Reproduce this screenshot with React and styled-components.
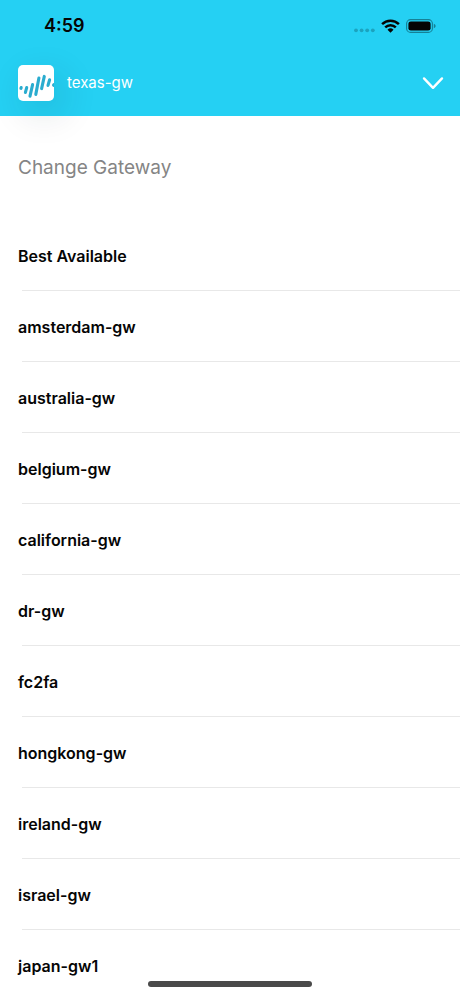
import React, { useState } from "react";
import styled, { createGlobalStyle, css } from "styled-components";

const GlobalStyle = createGlobalStyle`
  * {
    box-sizing: border-box;
  }

  body {
    margin: 0;
    background-color: #fff;
    font-family: "Inter", "Liberation Sans", sans-serif;
    color: #050505;
  }
`;

const Screen = styled.div`
  position: relative;
  display: flex;
  flex-direction: column;
  height: 100vh;
  overflow: hidden;
  background-color: #fff;
`;

const Header = styled.header`
  flex: none;
  background-color: #25d0f3;
`;

const StatusBar = styled.div`
  display: flex;
  align-items: center;
  justify-content: space-between;
  height: 50px;
  padding: 2px 24px 0 44px;
`;

const Clock = styled.time`
  font-size: 18px;
  font-weight: 600;
  line-height: 24px;
`;

const StatusIcons = styled.div`
  display: flex;
  align-items: center;
  gap: 6px;

  & svg {
    display: block;
  }
`;

const GatewayBar = styled.button`
  display: flex;
  align-items: center;
  width: 100%;
  height: 66px;
  padding: 0 16px 0 18px;
  border: none;
  background: none;
  color: #fff;
  font-family: inherit;
  text-align: left;
  cursor: pointer;
`;

const Logo = styled.span`
  flex: none;
  width: 36px;
  height: 36px;
  border-radius: 5px;
  background-color: #fff;
  box-shadow: 8px 12px 36px rgba(0, 40, 60, 0.14);

  & svg {
    display: block;
  }
`;

const CurrentGateway = styled.span`
  flex: 1;
  margin-left: 13px;
  font-size: 15px;
  font-weight: 400;
  line-height: 20px;
`;

const Title = styled.h1`
  flex: none;
  margin: 0;
  padding: 40px 18px;
  font-size: 19px;
  font-weight: 400;
  line-height: 24px;
  color: #858585;
`;

const GatewayList = styled.ul`
  flex: 1;
  min-height: 0;
  margin: 0;
  padding: 0;
  list-style: none;
  overflow-y: auto;
  scrollbar-width: none;
`;

const GatewayItem = styled.li`
  ${(props) =>
    props.$divided &&
    css`
      &::before {
        content: "";
        display: block;
        height: 1px;
        margin-left: 22px;
        background-color: #e8e8e8;
      }
    `};
`;

const GatewayButton = styled.button`
  display: block;
  width: 100%;
  height: 70px;
  padding: 2px 18px 0;
  border: none;
  background: none;
  color: inherit;
  font-family: inherit;
  font-size: 16px;
  font-weight: 600;
  line-height: 20px;
  text-align: left;
  cursor: pointer;
`;

const HomeIndicator = styled.div`
  position: absolute;
  bottom: 9px;
  left: 50%;
  width: 164px;
  height: 6px;
  margin-left: -82px;
  border-radius: 3px;
  background-color: #4a4a4a;
`;

const gateways = [
  "Best Available",
  "amsterdam-gw",
  "australia-gw",
  "belgium-gw",
  "california-gw",
  "dr-gw",
  "fc2fa",
  "hongkong-gw",
  "ireland-gw",
  "israel-gw",
  "japan-gw1",
];

const SignalDots = () => (
  <svg width="21" height="14" viewBox="0 0 21 14" fill="#1ba3bf" aria-hidden="true">
    <circle cx="2" cy="11.3" r="1.9" />
    <circle cx="7.6" cy="11.3" r="1.9" />
    <circle cx="13.2" cy="11.3" r="1.9" />
    <circle cx="18.8" cy="11.3" r="1.9" />
  </svg>
);

const Wifi = () => (
  <svg width="19" height="14" viewBox="0 0 19 14" aria-hidden="true">
    <g fill="none" stroke="#050505" strokeWidth="2.5">
      <path d="M1.1 5.1a12 12 0 0 1 16.8 0" />
      <path d="M4.2 8.3a7.6 7.6 0 0 1 10.6 0" />
    </g>
    <path d="M9.5 13.8 6.5 10.8a4.3 4.3 0 0 1 6 0z" fill="#050505" />
  </svg>
);

const Battery = () => (
  <svg width="30" height="14" viewBox="0 0 30 14" aria-hidden="true">
    <rect x="0.6" y="0.6" width="25.8" height="12.8" rx="4" fill="none" stroke="#158096" strokeWidth="1.1" />
    <rect x="2.4" y="2.4" width="22.2" height="9.2" rx="2.4" fill="#050505" />
    <path d="M27.8 4.8c1.3.5 1.8 1.2 1.8 2.2s-.5 1.7-1.8 2.2z" fill="#158096" />
  </svg>
);

const LogoMark = () => (
  <svg width="36" height="36" viewBox="0 0 36 36" aria-hidden="true">
    <g stroke="#2aaccf" strokeWidth="3.1" strokeLinecap="round">
      <path d="M3.2 22.5 2.9 23.4" />
      <path d="M8.7 22.6 7.4 27.4" />
      <path d="M14.6 19.6 12 31.2" />
      <path d="M20.9 13 17.8 29.4" />
      <path d="M26.3 11.4 23.6 23.6" />
      <path d="M31.6 14.8 30 20.4" />
    </g>
    <path d="M36 18a2 2 0 0 0-1.8 2.8q.6 1.2 1.8 1.2z" fill="#2aaccf" />
  </svg>
);

const Chevron = () => (
  <svg width="22" height="14" viewBox="0 0 22 14" aria-hidden="true">
    <path d="M2 2.4 11 11.8 20 2.4" fill="none" stroke="#fff" strokeWidth="2.4" strokeLinecap="round" strokeLinejoin="round" />
  </svg>
);

const App = () => {
  const [current, setCurrent] = useState("texas-gw");

  return (
    <>
      <GlobalStyle />
      <Screen>
        <Header>
          <StatusBar>
            <Clock>4:59</Clock>
            <StatusIcons>
              <SignalDots />
              <Wifi />
              <Battery />
            </StatusIcons>
          </StatusBar>
          <GatewayBar type="button" aria-expanded="true">
            <Logo>
              <LogoMark />
            </Logo>
            <CurrentGateway>{current}</CurrentGateway>
            <Chevron />
          </GatewayBar>
        </Header>
        <Title>Change Gateway</Title>
        <GatewayList>
          {gateways.map((name, idx) => (
            <GatewayItem key={name} $divided={idx > 0}>
              <GatewayButton type="button" onClick={() => setCurrent(name)}>
                {name}
              </GatewayButton>
            </GatewayItem>
          ))}
        </GatewayList>
        <HomeIndicator />
      </Screen>
    </>
  );
};

export default App;
